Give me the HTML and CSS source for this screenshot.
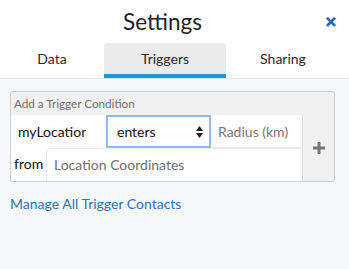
FILE: index.html
```html
<!DOCTYPE html>
<html lang="en">
<head>
    <meta charset="UTF-8">
    <meta name="viewport" content="width=device-width, initial-scale=1.0">
    <title>Settings</title>
    <link rel="stylesheet" href="styles.css">
</head>
<body>
    <header>
        <div class="title-row">
            <h1>Settings</h1>
            <span class="close">&#x2715;</span>
        </div>
        <nav class="tabs">
            <div class="tab">Data</div>
            <div class="tab active">Triggers</div>
            <div class="tab">Sharing</div>
        </nav>
    </header>

    <div class="content">
        <div class="panel">
            <div class="panel-title">Add a Trigger Condition</div>
            <div class="panel-body">
                <div class="fields">
                    <div class="row">
                        <div class="field name"><span class="clip">myLocation</span></div>
                        <div class="field select">
                            <span>enters</span>
                            <svg width="7" height="12" viewBox="0 0 7 12"><path d="M3.5 0L7 5H0z M3.5 12L0 7h7z" fill="#222"/></svg>
                        </div>
                        <div class="field radius">Radius (km)</div>
                    </div>
                    <div class="row">
                        <div class="label">from</div>
                        <div class="field coords">Location Coordinates</div>
                    </div>
                </div>
                <div class="add-btn">
                    <svg width="12" height="12" viewBox="0 0 12 12"><path d="M4.5 0h3v4.5H12v3H7.5V12h-3V7.5H0v-3h4.5z" fill="#777"/></svg>
                </div>
            </div>
        </div>

        <a class="manage-link" href="#">Manage All Trigger Contacts</a>
    </div>
</body>
</html>
```

FILE: styles.css
```css
body {
    font-family: Lato, 'Noto Sans', sans-serif;
    margin: 0;
    padding: 0;
    background-color: #f7f8fa;
    color: #333;
    width: 349px;
    height: 269px;
    overflow: hidden;
}

header {
    background-color: white;
    border-bottom: 1px solid #e4e6e9;
}

.title-row {
    height: 43px;
    display: flex;
    align-items: center;
}

h1 {
    flex: 1;
    margin: 0;
    font-size: 22.5px;
    font-weight: normal;
    text-align: center;
    color: #222;
    line-height: 40px;
}

.close {
    width: 24px;
    color: #1f6fc4;
    font-size: 14px;
    font-weight: bold;
    -webkit-text-stroke: 0.6px #1f6fc4;
}

.tabs {
    display: grid;
    grid-template-columns: 104px 122px 114px;
    height: 35px;
}

.tab {
    text-align: center;
    font-size: 14px;
    line-height: 31px;
    color: #2a2a2a;
    border-bottom: 4px solid transparent;
}

.tab.active {
    background-color: #ebebeb;
    border-bottom-color: #1a9ad6;
    border-radius: 3px 3px 0 0;
}

.content {
    padding: 12px 14px 0 10px;
}

.panel {
    background-color: #f1f1f1;
    border: 1px solid #cfcfcf;
    border-radius: 3px;
}

.panel-title {
    height: 23px;
    line-height: 23px;
    font-size: 11.7px;
    color: #707070;
    padding-left: 3px;
}

.panel-body {
    display: flex;
}

.fields {
    flex: 1;
    background-color: white;
    border-radius: 0 3px 0 3px;
}

.row {
    display: flex;
    height: 33px;
}

.field {
    font-size: 14px;
    line-height: 33px;
    box-sizing: border-box;
    white-space: nowrap;
    overflow: hidden;
}

.name {
    width: 95px;
    padding-left: 7px;
    color: #111;
}

.clip {
    display: inline-block;
    width: 68px;
    overflow: hidden;
    vertical-align: top;
}

.select {
    width: 105px;
    border: 2px solid #8fbcf0;
    line-height: 29px;
    padding: 0 6px 0 9px;
    display: flex;
    justify-content: space-between;
    align-items: center;
    color: #111;
}

.radius {
    flex: 1;
    padding-left: 7px;
    color: #777;
    border-bottom: 1px solid #ececec;
    border-radius: 0 4px 0 0;
}

.label {
    width: 35px;
    font-size: 14px;
    line-height: 31px;
    padding-left: 3px;
    box-sizing: border-box;
    color: #111;
}

.coords {
    flex: 1;
    padding-left: 7px;
    color: #707070;
    border-top: 1px solid #ececec;
    border-left: 1px solid #ececec;
    border-radius: 5px 0 0 0;
    line-height: 31px;
}

.add-btn {
    width: 31px;
    border-left: 1px solid #dcdcdc;
    display: flex;
    align-items: center;
    justify-content: center;
}

.manage-link {
    display: block;
    margin-top: 13px;
    font-size: 14px;
    color: #2a74c6;
    text-decoration: none;
}
```
